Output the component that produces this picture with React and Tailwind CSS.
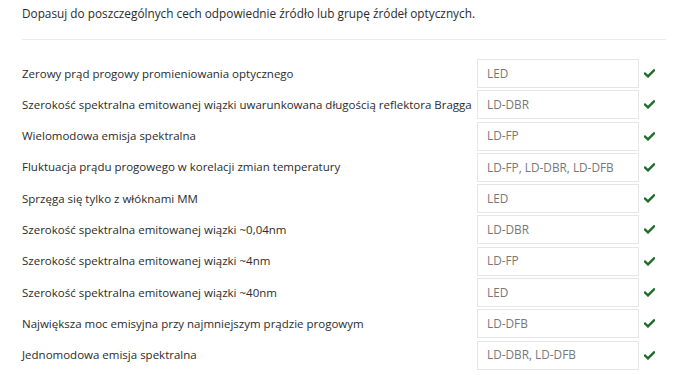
const rows = [
  ["Zerowy prąd progowy promieniowania optycznego", "LED"],
  ["Szerokość spektralna emitowanej wiązki uwarunkowana długością reflektora Bragga", "LD-DBR"],
  ["Wielomodowa emisja spektralna", "LD-FP"],
  ["Fluktuacja prądu progowego w korelacji zmian temperatury", "LD-FP, LD-DBR, LD-DFB"],
  ["Sprzęga się tylko z włóknami MM", "LED"],
  ["Szerokość spektralna emitowanej wiązki ~0,04nm", "LD-DBR"],
  ["Szerokość spektralna emitowanej wiązki ~4nm", "LD-FP"],
  ["Szerokość spektralna emitowanej wiązki ~40nm", "LED"],
  ["Największa moc emisyjna przy najmniejszym prądzie progowym", "LD-DFB"],
  ["Jednomodowa emisja spektralna", "LD-DBR, LD-DFB"],
];

function Check() {
  return (
    <svg width="11" height="9" viewBox="0 0 11 9" className="shrink-0">
      <path d="M1 4.6 L4 7.4 L10 1.4" fill="none" stroke="#1f6b2a" strokeWidth="2.4" strokeLinecap="square" />
    </svg>
  );
}

export default function App() {
  return (
    <div className="w-[697px] h-[375px] overflow-hidden bg-white text-[#2b2b2b] font-['Open_Sans',sans-serif]">
      <div className="w-[644px] ml-[22px]">
        <p className="text-[11.8px] leading-4 pt-[5px]">
          Dopasuj do poszczególnych cech odpowiednie źródło lub grupę źródeł optycznych.
        </p>
        <div className="mt-[18px] border-t border-[#ececec]" />

        <div className="mt-[19px] pr-[7px] flex flex-col gap-[2.3px]">
          {rows.map(([label, answer]) => (
            <div key={label} className="flex items-center h-[29px]">
              <span className="flex-1 text-[11.5px] leading-4">{label}</span>
              <div className="w-[162px] h-full flex items-center px-[9px] border border-[#e6e6e6] text-[11.8px] text-[#777]">
                {answer}
              </div>
              <div className="w-[20px] flex justify-center">
                <Check />
              </div>
            </div>
          ))}
        </div>
      </div>
    </div>
  );
}
